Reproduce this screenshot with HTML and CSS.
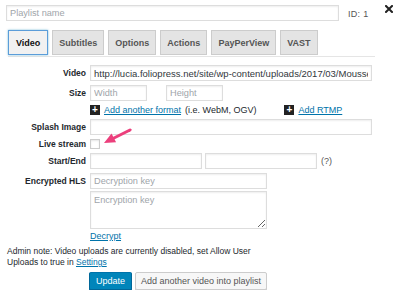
FILE: index.html
```html
<!DOCTYPE html>
<html lang="en">

<head>
    <meta charset="UTF-8">
    <title>Playlist</title>
    <link rel="stylesheet" href="styles.css">
</head>

<body>
    <div class="editor">
        <div class="top">
            <input type="text" class="name" placeholder="Playlist name">
            <span class="id">ID: 1</span>
            <svg class="close" width="8" height="8" viewBox="0 0 8 8">
                <path d="M1 1 L7 7 M7 1 L1 7" stroke="#222" stroke-width="2" stroke-linecap="square"/>
            </svg>
        </div>
        <div class="tabs">
            <span class="tab active">Video</span>
            <span class="tab">Subtitles</span>
            <span class="tab">Options</span>
            <span class="tab">Actions</span>
            <span class="tab">PayPerView</span>
            <span class="tab">VAST</span>
        </div>

        <div class="form">
            <label>Video</label>
            <div class="field"><input type="text" class="wide url" value="http://lucia.foliopress.net/site/wp-content/uploads/2017/03/Mousse.mp4"></div>

            <label>Size</label>
            <div class="field"><input type="text" class="small" placeholder="Width"><input type="text" class="small gap" placeholder="Height"></div>

            <span></span>
            <div class="field adds">
                <span class="plus">+</span><a href="#">Add another format</a><span class="hint">(i.e. WebM, OGV)</span>
                <span class="plus rtmp">+</span><a href="#">Add RTMP</a>
            </div>

            <label>Splash Image</label>
            <div class="field"><input type="text" class="wide"></div>

            <label>Live stream</label>
            <div class="field"><span class="check"></span></div>

            <label>Start/End</label>
            <div class="field"><input type="text" class="half"><input type="text" class="half"><span class="help">(?)</span></div>

            <label class="top-label">Encrypted HLS</label>
            <div class="field stack">
                <input type="text" class="key" placeholder="Decryption key">
                <textarea class="key" placeholder="Encryption key"></textarea>
                <a href="#" class="decrypt">Decrypt</a>
            </div>
        </div>

        <p class="note">Admin note: Video uploads are currently disabled, set Allow User Uploads to true in <a href="#">Settings</a></p>

        <div class="buttons">
            <button class="primary">Update</button>
            <button>Add another video into playlist</button>
        </div>

        <svg class="arrow" width="34" height="22" viewBox="0 0 34 22">
            <path d="M30 4 L13 12.5" stroke="#ec3f7c" stroke-width="3" stroke-linecap="round" fill="none"/>
            <path d="M4 17 L11.5 7.5 L16.1 16.3 Z" fill="#ec3f7c"/>
        </svg>
    </div>
</body>

</html>
```

FILE: styles.css
```css
body {
    margin: 0;
    font-family: "Liberation Sans", Arial, sans-serif;
    font-size: 9px;
    color: #23282d;
    background: #fff;
}

.editor {
    position: relative;
    padding: 5px 0 0 6px;
}

input,
textarea {
    font-family: "Liberation Sans", Arial, sans-serif;
    font-size: 9.2px;
    color: #32373c;
    border: 1px solid #ddd;
    box-shadow: inset 0 1px 2px rgba(0, 0, 0, 0.07);
    padding: 0 3px;
    margin: 0;
    box-sizing: border-box;
    height: 16px;
    outline: none;
}

input::placeholder,
textarea::placeholder {
    color: #a0a5aa;
}

.top {
    display: flex;
    align-items: center;
    height: 16px;
}

.name {
    width: 333px;
}

.id {
    margin-left: 9px;
    font-size: 9px;
    color: #555;
    padding-top: 2px;
    letter-spacing: 0.3px;
}

.close {
    margin-left: 16px;
    margin-top: -8px;
}

.tabs {
    display: flex;
    gap: 4px;
    margin: 9px 25px 0 2px;
    padding-bottom: 1px;
    border-bottom: 1px solid #e5e5e5;
}

.tab {
    display: block;
    padding: 7px 6px 6px;
    background: #e4e4e4;
    border: 1px solid #ccc;
    font-weight: bold;
    font-size: 9px;
    color: #555;
    line-height: 10px;
}

.tab.active {
    background: #f1f1f1;
    border-color: #5b9dd9;
    color: #111;
    padding: 7px 7px 6px;
    box-shadow: 0 0 2px rgba(30, 140, 190, 0.6);
}

.form {
    display: grid;
    grid-template-columns: 80px 1fr;
    column-gap: 4px;
    row-gap: 4px;
    margin-top: 8px;
    align-items: center;
}

.form label {
    text-align: right;
    font-weight: bold;
    font-size: 8.5px;
    color: #23282d;
    line-height: 10px;
}

.form label.top-label {
    align-self: start;
    padding-top: 3px;
}

.field {
    display: flex;
    align-items: center;
}

.wide {
    width: 282px;
}

.url {
    font-size: 9.5px;
}

.small {
    width: 57px;
}

.small.gap {
    margin-left: 19px;
}

.half {
    width: 112px;
    margin-right: 3px;
}

.help {
    font-size: 9px;
    color: #555;
    margin-left: 1px;
}

.adds {
    height: 10px;
}

.plus {
    display: inline-block;
    width: 10px;
    height: 10px;
    background: #222;
    color: #fff;
    font-weight: bold;
    font-size: 10px;
    line-height: 10px;
    text-align: center;
    margin-right: 4px;
}

.plus.rtmp {
    margin-left: 28px;
}

a {
    color: #0073aa;
    text-decoration: underline;
}

.hint {
    margin-left: 4px;
}

.check {
    display: block;
    width: 8px;
    height: 8px;
    border: 1px solid #ccc;
    box-shadow: inset 0 1px 2px rgba(0, 0, 0, 0.1);
}

.stack {
    flex-direction: column;
    align-items: flex-start;
}

.key {
    width: 177px;
}

textarea.key {
    height: 38px;
    margin-top: 2px;
    padding-top: 3px;
    resize: vertical;
}

.decrypt {
    margin-top: 2px;
    line-height: 11px;
}

.note {
    margin: 4px 0 0 1px;
    width: 262px;
    line-height: 11px;
    font-size: 8.5px;
}

.buttons {
    display: flex;
    gap: 3px;
    margin: 4px 0 0 83px;
}

button {
    font-family: "Liberation Sans", Arial, sans-serif;
    font-size: 9px;
    height: 18px;
    padding: 0 5px;
    margin: 0;
    border: 1px solid #ccc;
    background: #f7f7f7;
    color: #555;
    border-radius: 2px;
    box-shadow: 0 1px 0 #ccc;
}

button.primary {
    background: #0085ba;
    border-color: #0073aa #006799 #006799;
    color: #fff;
    box-shadow: 0 1px 0 #006799;
    padding: 0 6px;
}

.arrow {
    position: absolute;
    left: 100px;
    top: 126px;
}
```
